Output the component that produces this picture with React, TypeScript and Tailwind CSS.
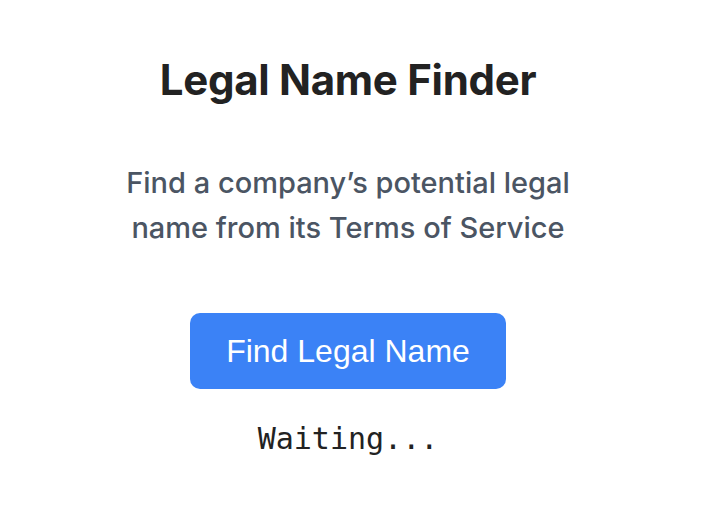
export default function App() {
  return (
    <div className="min-h-[526px] w-full bg-white flex flex-col items-center pr-[9px] pt-[55px]">
      <h1 className="font-['Inter',sans-serif] font-bold text-[42px] leading-[50px] text-[#222222] tracking-[-0.3px]">
        Legal Name Finder
      </h1>
      <p className="mt-[55px] text-center font-['Inter',sans-serif] font-medium text-[29px] leading-[45px] text-[#4b5563]">
        Find a company’s potential legal
        <br />
        name from its Terms of Service
      </p>
      <button className="mt-[63px] w-[316px] h-[76px] rounded-[10px] bg-[#3b82f6] text-white font-['Liberation_Sans',Arial,sans-serif] text-[32px]">
        Find Legal Name
      </button>
      <div className="mt-[30px] font-['DejaVu_Sans_Mono',monospace] text-[30px] leading-[40px] text-[#222222]">
        Waiting...
      </div>
    </div>
  );
}
